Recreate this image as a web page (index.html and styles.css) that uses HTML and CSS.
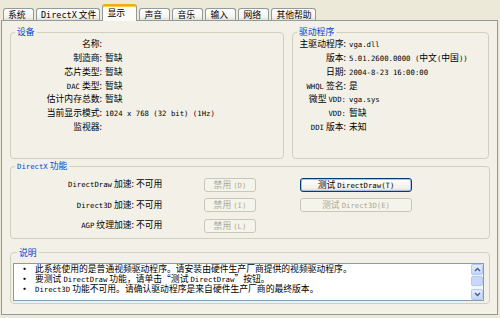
FILE: index.html
```html
<!DOCTYPE html>
<html lang="zh-CN">
<head>
    <meta charset="UTF-8">
    <title>DirectX 诊断工具 - 显示</title>
    <link rel="stylesheet" href="styles.css">
</head>
<body>
    <div class="window">
        <div class="tabs">
            <div class="tab">系统</div>
            <div class="tab"><span><span class="tm">DirectX</span> 文件</span></div>
            <div class="tab active">显示</div>
            <div class="tab">声音</div>
            <div class="tab">音乐</div>
            <div class="tab">输入</div>
            <div class="tab">网络</div>
            <div class="tab">其他帮助</div>
        </div>
        <div class="page">
            <div class="top-row">
                <fieldset class="group device">
                    <legend>设备</legend>
                    <div class="info">
                        <span class="k">名称:</span><span class="v"></span>
                        <span class="k">制造商:</span><span class="v">暂缺</span>
                        <span class="k">芯片类型:</span><span class="v">暂缺</span>
                        <span class="k"><span class="m">DAC</span> 类型:</span><span class="v">暂缺</span>
                        <span class="k">估计内存总数:</span><span class="v">暂缺</span>
                        <span class="k">当前显示模式:</span><span class="v m">1024 x 768 (32 bit) (1Hz)</span>
                        <span class="k">监视器:</span><span class="v"></span>
                    </div>
                </fieldset>
                <fieldset class="group driver">
                    <legend>驱动程序</legend>
                    <div class="info drv">
                        <span class="k">主驱动程序:</span><span class="v m">vga.dll</span>
                        <span class="k">版本:</span><span class="v"><span class="m">5.01.2600.0000 (</span>中文<span class="m">(</span>中国<span class="m">))</span></span>
                        <span class="k">日期:</span><span class="v m">2004-8-23 16:00:00</span>
                        <span class="k"><span class="m">WHQL</span> 签名:</span><span class="v">是</span>
                        <span class="k">微型 <span class="m">VDD:</span></span><span class="v m">vga.sys</span>
                        <span class="k"><span class="m">VDD:</span></span><span class="v">暂缺</span>
                        <span class="k"><span class="m">DDI</span> 版本:</span><span class="v">未知</span>
                    </div>
                </fieldset>
            </div>

            <fieldset class="group features">
                <legend><span class="m">DirectX</span> 功能</legend>
                <div class="feat">
                    <span class="k"><span class="m">DirectDraw</span> 加速:</span>
                    <span class="v">不可用</span>
                    <button class="btn off">禁用 <span class="m">(D)</span></button>
                    <span></span>
                    <button class="btn main">测试 <span class="m">DirectDraw(T)</span></button>

                    <span class="k"><span class="m">Direct3D</span> 加速:</span>
                    <span class="v">不可用</span>
                    <button class="btn off">禁用 <span class="m">(I)</span></button>
                    <span></span>
                    <button class="btn off">测试 <span class="m">Direct3D(E)</span></button>

                    <span class="k"><span class="m">AGP</span> 纹理加速:</span>
                    <span class="v">不可用</span>
                    <button class="btn off">禁用 <span class="m">(L)</span></button>
                    <span></span>
                    <span></span>
                </div>
            </fieldset>

            <fieldset class="group notes">
                <legend>说明</legend>
                <div class="memo">
                    <ul>
                        <li><span class="dot">•</span>此系统使用的是普通视频驱动程序。请安装由硬件生产厂商提供的视频驱动程序。</li>
                        <li><span class="dot">•</span>要测试 <span class="m">DirectDraw</span> 功能，请单击“测试 <span class="m">DirectDraw</span>”按钮。</li>
                        <li><span class="dot">•</span><span class="m">Direct3D</span> 功能不可用。请确认驱动程序是来自硬件生产厂商的最终版本。</li>
                    </ul>
                    <div class="scrollbar">
                        <div class="sb-btn">
                            <svg width="7" height="5" viewBox="0 0 7 5"><path d="M1 4 L3.5 1.5 L6 4" fill="none" stroke="#4d6185" stroke-width="1.5"/></svg>
                        </div>
                        <div class="sb-thumb"></div>
                        <div class="sb-track"></div>
                        <div class="sb-btn">
                            <svg width="7" height="5" viewBox="0 0 7 5"><path d="M1 1 L3.5 3.5 L6 1" fill="none" stroke="#4d6185" stroke-width="1.5"/></svg>
                        </div>
                    </div>
                </div>
            </fieldset>
        </div>
    </div>
</body>
</html>
```

FILE: styles.css
```css
body {
    margin: 0;
    width: 500px;
    height: 318px;
    overflow: hidden;
    background-color: #ece9d8;
    font-family: "Noto Sans CJK SC", sans-serif;
    font-size: 8.8px;
    line-height: 1;
    color: #000;
}
.window {
    padding: 0 2px 0 1px;
}
.m {
    font-family: "DejaVu Sans Mono", monospace;
    font-size: 7.3px;
}

/* tab strip */
.tabs {
    display: flex;
    align-items: flex-end;
    height: 20px;
    padding-left: 2px;
}
.tab {
    box-sizing: border-box;
    height: 12px;
    min-width: 31px;
    padding: 0 3px 0 4px;
    margin-right: 2px;
    border: 1px solid #919b9c;
    border-bottom: none;
    border-radius: 3px 3px 0 0;
    background: linear-gradient(#ffffff, #f4f3ee 70%, #e3e1d6);
    display: flex;
    align-items: center;
    line-height: 10px;
    white-space: nowrap;
}
.tab .tm {
    font-family: "DejaVu Sans Mono", monospace;
    font-size: 8.5px;
}
.tab.active {
    height: 17px;
    margin-bottom: -1px;
    min-width: 35px;
    border-top: 2px solid #f5a623;
    box-shadow: inset 0 1px 0 #ffc83c;
    background: #fbfbf7;
    align-items: flex-start;
    padding-top: 2px;
    position: relative;
    z-index: 1;
}

/* tab page */
.page {
    box-sizing: border-box;
    height: 295px;
    border: 1px solid #919b9c;
    background-color: #f2f0e7;
    padding: 6px 7px 0 8px;
}
.group {
    margin: 0;
    padding: 0;
    min-width: 0;
    border: 1px solid #d0d0bf;
    border-radius: 4px;
}
.group legend {
    margin-left: 4px;
    padding: 0 2px;
    color: #0046d5;
    line-height: 10px;
}
.top-row {
    display: grid;
    grid-template-columns: 274px 197px;
    column-gap: 8px;
}
.device, .driver {
    padding: 1px 0 24px 0;
}

.info {
    display: grid;
    grid-template-columns: 91px 1fr;
    grid-auto-rows: 13.7px;
    column-gap: 3px;
    align-items: center;
    white-space: nowrap;
}
.info.drv {
    grid-template-columns: 53px 1fr;
}
.info .k {
    text-align: right;
}

/* DirectX features */
.features {
    margin-top: 2px;
    padding: 6px 0 5px 0;
}
.feat {
    display: grid;
    grid-template-columns: 125px 68px 52px 44px 112px;
    grid-auto-rows: 14px;
    row-gap: 6.5px;
    align-items: center;
    white-space: nowrap;
}
.feat .k {
    text-align: right;
    padding-right: 2px;
}
.btn {
    box-sizing: border-box;
    height: 14px;
    margin: 0;
    padding: 0;
    font-family: inherit;
    font-size: 8.8px;
    line-height: 12px;
    text-align: center;
    white-space: nowrap;
    color: #000;
    border: 1px solid #003c74;
    border-radius: 3px;
    background: linear-gradient(#ffffff, #f0efea 80%, #d8d2c6);
}
.btn.main {
    box-shadow: inset 0 0 0 1px #a9c1ea;
}
.btn.off {
    color: #aca899;
    border-color: #c9c7ba;
    background: #f5f4ea;
}

/* notes */
.notes {
    margin-top: 9px;
    padding: 5px 5px 2px 2px;
}
.memo {
    box-sizing: border-box;
    height: 38px;
    border: 1px solid #7f9db9;
    background-color: #fff;
    display: flex;
}
.memo ul {
    flex: 1;
    min-width: 0;
    margin: 0;
    padding: 0 0 0 6px;
    list-style: none;
    white-space: nowrap;
}
.memo li {
    height: 10px;
    line-height: 10px;
}
.memo .dot {
    display: inline-block;
    width: 15px;
    font-size: 9px;
    font-weight: bold;
}
.scrollbar {
    width: 12px;
    display: flex;
    flex-direction: column;
    background-color: #f7f7f2;
}
.sb-btn {
    box-sizing: border-box;
    height: 11px;
    border: 1px solid #b4c8f6;
    border-radius: 2px;
    background: linear-gradient(#e4edfd, #c3d5fc);
    display: flex;
    align-items: center;
    justify-content: center;
}
.sb-thumb {
    box-sizing: border-box;
    height: 10px;
    margin-top: 1px;
    border: 1px solid #b4c8f6;
    border-radius: 2px;
    background-color: #c8d7fb;
}
.sb-track {
    flex: 1;
}
```
